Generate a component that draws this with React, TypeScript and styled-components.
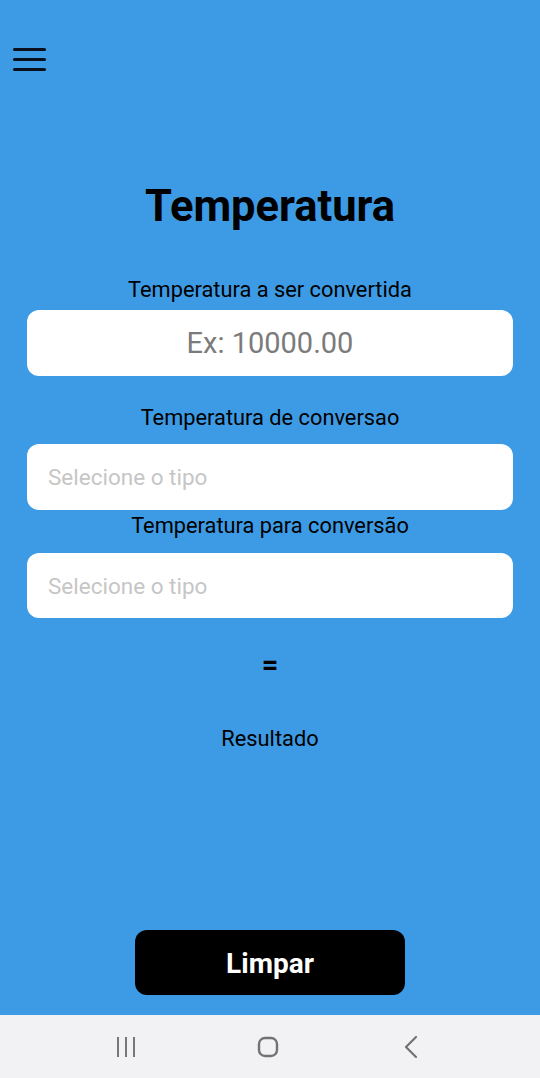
import React from "react";
import styled, { createGlobalStyle } from "styled-components";

const GlobalStyle = createGlobalStyle`
  html, body { margin: 0; padding: 0; }
  body { font-family: Roboto, "Noto Sans", sans-serif; background: #3d9be5; }
  * { box-sizing: border-box; }
`;

const Screen = styled.div`
  width: 540px;
  height: 1078px;
  display: flex;
  flex-direction: column;
  overflow: hidden;
`;

const Main = styled.main`
  flex: 1;
  background: #3d9be5;
  display: flex;
  flex-direction: column;
  align-items: center;
  padding: 48px 27px 20px;
`;

const MenuButton = styled.button`
  align-self: flex-start;
  margin-left: -14px;
  padding: 0;
  border: 0;
  background: transparent;
  display: flex;
  flex-direction: column;
  gap: 7px;
  cursor: pointer;
`;

const MenuLine = styled.span`
  display: block;
  width: 33px;
  height: 3px;
  border-radius: 1.5px;
  background: #0a0f1c;
`;

const Title = styled.h1`
  margin: 111px 0 0;
  font-size: 43.5px;
  line-height: 50px;
  font-weight: 700;
  color: #000;
`;

const Label = styled.label<{ $mt: number }>`
  margin-top: ${(p) => p.$mt}px;
  font-size: 21.8px;
  line-height: 24px;
  color: #000;
  text-align: center;
`;

const Field = styled.input<{ $mt: number; $center?: boolean; $h: number }>`
  margin-top: ${(p) => p.$mt}px;
  width: 100%;
  height: ${(p) => p.$h}px;
  border: 0;
  border-radius: 12px;
  background: #fff;
  font-family: Roboto, sans-serif;
  outline: none;
  padding: 0 21px;
  text-align: ${(p) => (p.$center ? "center" : "left")};
  font-size: ${(p) => (p.$center ? 29 : 22.5)}px;
  &::placeholder {
    color: ${(p) => (p.$center ? "#7b7b7b" : "#c6c6c6")};
  }
`;

const Equals = styled.div`
  margin-top: 35px;
  font-size: 29px;
  line-height: 24px;
  font-weight: 700;
  color: #000;
`;

const Result = styled.div`
  margin-top: 50px;
  font-size: 21.8px;
  line-height: 24px;
  color: #000;
`;

const ClearButton = styled.button`
  margin-top: auto;
  width: 270px;
  height: 65px;
  border: 0;
  border-radius: 12px;
  background: #000;
  color: #fff;
  font-family: Roboto, sans-serif;
  font-size: 28px;
  font-weight: 700;
  padding-top: 3px;
  cursor: pointer;
`;

const NavBar = styled.nav`
  height: 63px;
  background: #f2f2f4;
  display: flex;
  align-items: center;
  padding-left: 116px;
  gap: 119px;
`;

const NavIcon = styled.svg<{ $shift?: number }>`
  display: block;
  margin-left: ${(p) => p.$shift ?? 0}px;
`;

export default function App() {
  return (
    <>
      <GlobalStyle />
      <Screen>
        <Main>
          <MenuButton aria-label="menu">
            <MenuLine />
            <MenuLine />
            <MenuLine />
          </MenuButton>
          <Title>Temperatura</Title>
          <Label $mt={46}>Temperatura a ser convertida</Label>
          <Field $mt={8} $h={66} $center placeholder="Ex: 10000.00" />
          <Label $mt={30}>Temperatura de conversao</Label>
          <Field $mt={14} $h={66} placeholder="Selecione o tipo" />
          <Label $mt={4}>Temperatura para conversão</Label>
          <Field $mt={15} $h={65} placeholder="Selecione o tipo" />
          <Equals>=</Equals>
          <Result>Resultado</Result>
          <ClearButton>Limpar</ClearButton>
        </Main>
        <NavBar>
          <NavIcon width="22" height="22" viewBox="0 0 22 22">
            <g fill="#777">
              <rect x="1" y="1" width="2" height="20" />
              <rect x="9" y="1" width="2" height="20" />
              <rect x="17" y="1" width="2" height="20" />
            </g>
          </NavIcon>
          <NavIcon width="22" height="22" viewBox="0 0 22 22">
            <rect x="2" y="2" width="18" height="18" rx="6" fill="none" stroke="#727272" strokeWidth="2.4" />
          </NavIcon>
          <NavIcon $shift={6} width="14" height="24" viewBox="0 0 14 24">
            <path d="M12 2 L2 12 L12 22" fill="none" stroke="#727272" strokeWidth="2.2" strokeLinecap="round" strokeLinejoin="round" />
          </NavIcon>
        </NavBar>
      </Screen>
    </>
  );
}
